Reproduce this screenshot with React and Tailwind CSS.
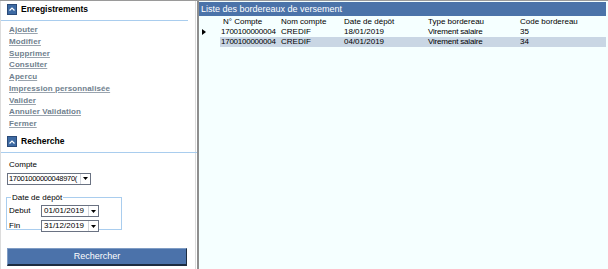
import React from 'react';

const links = ['Ajouter', 'Modifier', 'Supprimer', 'Consulter', 'Apercu', 'Impression personnalisée', 'Valider', 'Annuler Validation', 'Fermer'];

const rows = [
    { compte: '1700100000004', nom: 'CREDIF', date: '18/01/2019', type: 'Virement salaire', code: '35', current: true },
    { compte: '1700100000004', nom: 'CREDIF', date: '04/01/2019', type: 'Virement salaire', code: '34', selected: true },
];

// small collapse icon used by the section headers
const SectionIcon = () => (
    <div className="w-[10px] h-[11px] bg-[#3d6aa3] border border-[#2a4a78] flex items-center justify-center">
        <svg width="6" height="4" viewBox="0 0 6 4">
            <path d="M0.5 3.5 L3 1 L5.5 3.5" stroke="white" strokeWidth="1.2" fill="none" />
        </svg>
    </div>
);

const SectionHeader = ({ title }) => (
    <div className="flex items-center gap-[4px] pl-[6px] h-[14px]">
        <SectionIcon />
        <span className="text-[8.5px] font-bold text-black">{title}</span>
    </div>
);

const DropArrow = () => (
    <div className="w-[10px] h-full border-l border-gray-300 bg-white flex items-center justify-center">
        <svg width="5" height="3" viewBox="0 0 5 3">
            <path d="M0 0 L5 0 L2.5 3 Z" fill="black" />
        </svg>
    </div>
);

const DateInput = ({ value }) => (
    <div className="w-[58px] h-[12px] flex border border-gray-500 bg-white">
        <span className="flex-1 text-[8px] leading-[10px] pl-[2px] text-black">{value}</span>
        <DropArrow />
    </div>
);

export default function App() {
    return (
        <div className="w-[608px] h-[269px] flex bg-white border-t border-[#9a9a9a] font-['Liberation_Sans',Arial,sans-serif] overflow-hidden">
            {/* left side panel */}
            <div className="w-[196px] shrink-0 flex flex-col border-r border-l border-[#dcdcdc] pt-[1px]">
                <SectionHeader title="Enregistrements" />
                <div className="h-[1px] bg-[#a9cdee] w-[187px] mt-[4px]" />
                <div className="flex flex-col pl-[8px] pt-[3px]">
                    {links.map((l) => (
                        <span key={l} className="text-[8px] leading-[11.75px] font-bold text-[#707f8e] underline decoration-[#9aa4ae] tracking-[0.1px]">
                            {l}
                        </span>
                    ))}
                </div>
                <div className="mt-[5px]">
                    <SectionHeader title="Recherche" />
                </div>
                <div className="h-[1px] bg-[#a9cdee] w-[196px] mt-[3px]" />
                <div className="pl-[8px] pt-[6px] text-[8px] text-black">Compte</div>
                <div className="ml-[6px] mt-[2px] w-[84px] h-[12px] flex border border-gray-500 bg-white">
                    <span className="flex-1 overflow-hidden whitespace-nowrap text-[7.5px] leading-[10px] pl-[1px] tracking-[-0.3px] text-black">17001000000048970(</span>
                    <DropArrow />
                </div>
                <fieldset className="ml-[5px] mt-[8px] w-[116px] h-[37px] border border-[#a9cdee] px-[2px] pt-[2px]">
                    <legend className="text-[8px] px-[1px] ml-[2px] leading-[9px] text-black">Date de dépôt</legend>
                    <div className="flex items-center h-[15px]">
                        <span className="w-[32px] text-[8px] text-black">Debut</span>
                        <DateInput value="01/01/2019" />
                    </div>
                    <div className="flex items-center h-[15px]">
                        <span className="w-[32px] text-[8px] text-black">Fin</span>
                        <DateInput value="31/12/2019" />
                    </div>
                </fieldset>
                <button className="ml-[6px] mt-[18px] w-[180px] h-[18px] bg-[#4b72aa] border-t border-l border-[#7f9cc4] border-b-2 border-r border-b-[#1d2c40] border-r-[#1d2c40] text-white text-[9px] flex items-center justify-center">
                    Rechercher
                </button>
            </div>

            {/* main list */}
            <div className="flex-1 ml-[1px] border-l-2 border-[#8e8e8e] bg-[#f5ffff] pt-[1px] pr-[2px]">
                <div className="h-[14px] bg-[#4b73a9] text-white text-[9px] leading-[14px] pl-[2px]">
                    Liste des bordereaux de versement
                </div>
                <div className="flex h-[11px] items-center text-[8px] text-black">
                    <div className="w-[21px]" />
                    <div className="w-[60px] pl-[3px]">N° Compte</div>
                    <div className="w-[64px] pl-[1px]">Nom compte</div>
                    <div className="w-[84px]">Date de dépôt</div>
                    <div className="w-[92px]">Type bordereau</div>
                    <div className="flex-1">Code bordereau</div>
                </div>
                {rows.map((r, i) => (
                    <div key={i} className="flex h-[10px] items-center text-[8px] text-black">
                        <div className="w-[21px] flex items-center pl-[3px]">
                            {r.current && (
                                <svg width="4" height="6" viewBox="0 0 4 6">
                                    <path d="M0 0 L4 3 L0 6 Z" fill="black" />
                                </svg>
                            )}
                        </div>
                        <div className={`flex-1 flex h-full items-center ${r.selected ? 'bg-[#c9d6e4]' : ''}`}>
                            <div className="w-[60px] pl-[1px] tracking-[-0.25px]">{r.compte}</div>
                            <div className="w-[64px] pl-[1px]">{r.nom}</div>
                            <div className="w-[84px]">{r.date}</div>
                            <div className="w-[92px] tracking-[-0.2px]">{r.type}</div>
                            <div className="flex-1">{r.code}</div>
                        </div>
                    </div>
                ))}
            </div>
        </div>
    );
}
